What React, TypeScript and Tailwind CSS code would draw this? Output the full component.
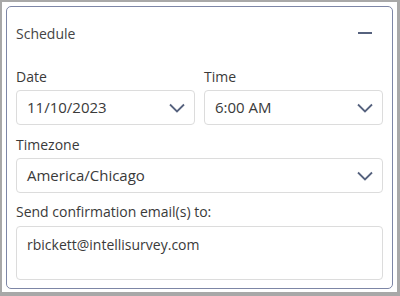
import { useState } from 'react';

function Chevron() {
  return (
    <svg className="w-[16px] h-[10px] text-[#56627e]" viewBox="0 0 16 10" fill="none" stroke="currentColor" strokeWidth={1.8}>
      <path d="M1 1.5l7 7 7-7" />
    </svg>
  );
}

function SelectBox({ value }: { value: string }) {
  return (
    <div className="flex items-center justify-between h-[35px] pl-[10px] pr-[9px] border border-[#dcdcdc] rounded-[4px] bg-white">
      <span className="text-[15px] text-[#3a3a3a]">{value}</span>
      <Chevron />
    </div>
  );
}

export default function App() {
  const [email] = useState('rbickett@intellisurvey.com');

  return (
    <div
      className="w-[400px] h-[296px] bg-white border-l-2 border-t-2 border-r-[3px] border-b-[4px] border-[#a8a8a8] pl-[4px] pt-[4px] pr-[4px] pb-[3px]"
      style={{ fontFamily: '"Open Sans", "Noto Sans", sans-serif' }}
    >
      <div className="h-full border border-[#7d86a6] rounded-[5px] px-[9px] pt-[16px] flex flex-col">
        {/* Header */}
        <div className="flex items-center justify-between h-[20px]">
          <span className="text-[14px] text-[#444444]">Schedule</span>
          <span className="w-[14px] h-[2px] bg-[#56627e] mr-[11px]" />
        </div>

        {/* Date / Time */}
        <div className="grid grid-cols-2 gap-[9px] mt-[24px]">
          <div className="flex flex-col">
            <label className="text-[14px] leading-[20px] text-[#3a3a3a] mb-[3px]">Date</label>
            <SelectBox value="11/10/2023" />
          </div>
          <div className="flex flex-col">
            <label className="text-[14px] leading-[20px] text-[#3a3a3a] mb-[3px]">Time</label>
            <SelectBox value="6:00 AM" />
          </div>
        </div>

        {/* Timezone */}
        <div className="flex flex-col mt-[10px]">
          <label className="text-[14px] leading-[20px] text-[#3a3a3a] mb-[3px]">Timezone</label>
          <SelectBox value="America/Chicago" />
        </div>

        {/* Email */}
        <div className="flex flex-col mt-[9px]">
          <label className="text-[14px] leading-[20px] text-[#3a3a3a] mb-[4px]">Send confirmation email(s) to:</label>
          <div className="h-[54px] border border-[#dcdcdc] rounded-[4px] px-[10px] pt-[5px]">
            <span className="text-[14px] text-[#3a3a3a]">{email}</span>
          </div>
        </div>
      </div>
    </div>
  );
}
